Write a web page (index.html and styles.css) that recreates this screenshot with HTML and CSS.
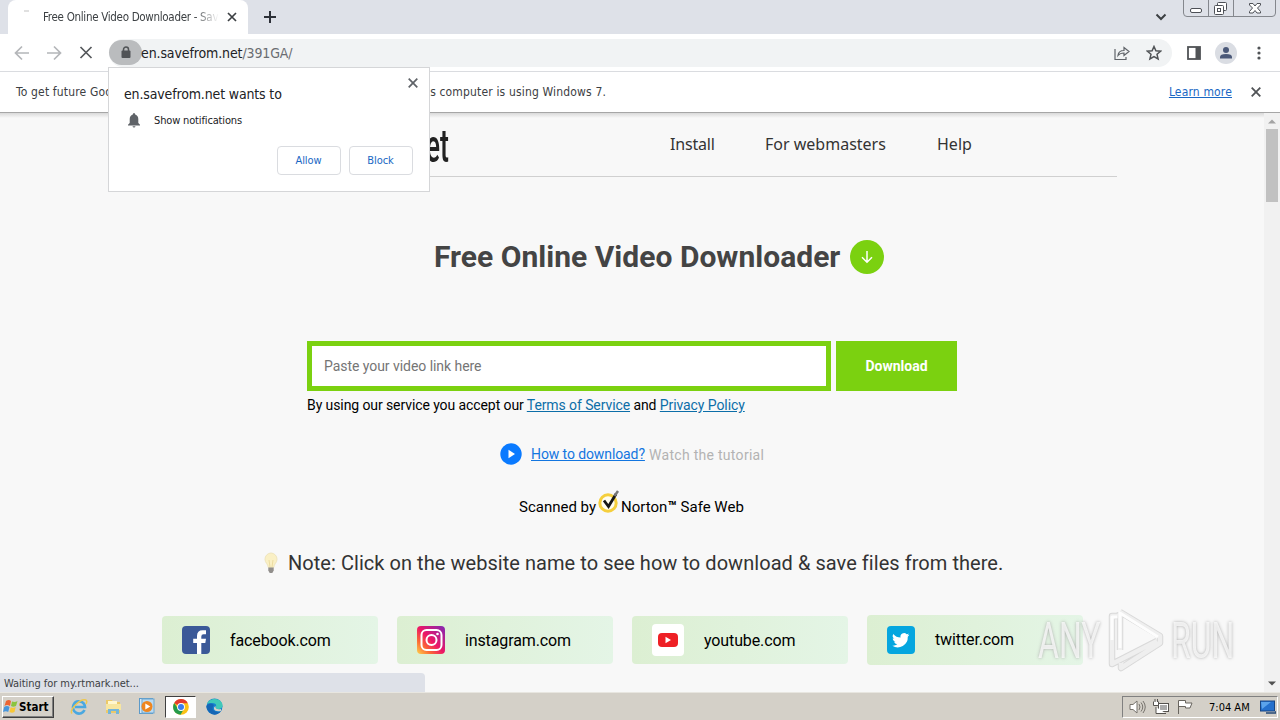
FILE: index.html
```html
<!DOCTYPE html>
<html lang="en">
<head>
  <meta charset="UTF-8">
  <meta name="viewport" content="width=device-width, initial-scale=1.0">
  <title>Free Online Video Downloader</title>
  <link rel="stylesheet" href="styles.css">
</head>
<body>

  <div class="tab-strip">
    <div class="tab">
      <span class="spinner"></span>
      <span class="tab-title">Free Online Video Downloader - Save</span>
      <svg class="tab-close" width="10" height="10" viewBox="0 0 10 10"><path d="M1 1l8 8M9 1L1 9" stroke="#3c4043" stroke-width="1.7"/></svg>
    </div>
    <svg class="new-tab" width="12" height="12" viewBox="0 0 12 12"><path d="M6 0v12M0 6h12" stroke="#2d3038" stroke-width="2"/></svg>
    <svg class="tab-search" width="12" height="8" viewBox="0 0 12 8"><path d="M1.500 1.500L6 6l4.500-4.500" fill="none" stroke="#3c4043" stroke-width="2"/></svg>
    <svg class="win-controls" width="94" height="18" viewBox="0 0 94 18">
      <path d="M.5 0v13q0 3.500 3.500 3.500h85q3.500 0 3.500-3.500V0M25.500 0v16M50.500 0v16" fill="none" stroke="#84878d"/>
      <g fill="#fff" stroke="#4d5056">
        <rect x="7.500" y="8.500" width="11" height="4" rx="1.500"/>
        <rect x="34.500" y="2.500" width="9" height="8" rx="1"/>
        <rect x="31.500" y="5.500" width="9" height="9" rx="1"/>
        <rect x="34.500" y="8.500" width="3" height="3"/>
        <path d="M66.500 3.500h3.500l2 2.500 2-2.500h3.500v1.500l-3 3 3 3.500v1.500H74l-2-2.500-2 2.500h-3.500v-1.500l3-3.500-3-3z"/>
      </g>
    </svg>
  </div>

  <div class="toolbar">
    <svg class="nav-icons" width="82" height="16" viewBox="0 0 82 16" fill="none" stroke-width="1.700">
      <path d="M15 8H2M8 1.500L1.500 8 8 14.500M33 8h13M40 1.500L46.500 8 40 14.500" stroke="#b4b6b9"/>
      <path d="M66.500 2l11 11M77.500 2l-11 11" stroke="#55585c"/>
    </svg>
    <div class="omnibox">
      <span class="lock">
        <svg width="10" height="13" viewBox="0 0 10 13"><path d="M2.500 5V3.500a2.500 2.500 0 015 0V5" fill="none" stroke="#505356" stroke-width="1.500"/><rect x=".5" y="4.500" width="9" height="7.500" rx="1" fill="#505356"/></svg>
      </span>
      <span class="url">en.savefrom.net<span class="url-path">/391GA/</span></span>
      <svg class="share" width="16" height="16" viewBox="0 0 16 16" fill="none" stroke="#5f6368" stroke-width="1.200"><path d="M1 4v10.500h11V12M4 10.500q.5-5 6-5V2.500l5 4-5 4V8Q6 8 4 10.500z"/></svg>
      <svg class="star" width="16" height="16" viewBox="0 0 16 16"><path d="M8 1.500l1.900 4.300 4.700.4-3.600 3.100 1.100 4.600L8 11.500l-4.100 2.400L5 9.300 1.400 6.200l4.700-.4z" fill="none" stroke="#505356" stroke-width="1.500"/></svg>
    </div>
    <svg class="side-panel" width="14" height="14" viewBox="0 0 14 14"><rect x="1" y="1" width="12" height="12" fill="#fff" stroke="#505356" stroke-width="1.800"/><path d="M8.500 1H13v12H8.500z" fill="#505356"/></svg>
    <span class="avatar">
      <svg width="14" height="14" viewBox="0 0 14 14" fill="#4a5878"><circle cx="7" cy="4" r="3"/><path d="M1 12.500V11q0-3 6-3t6 3v1.500z"/></svg>
    </span>
    <svg class="menu-dots" width="4" height="14" viewBox="0 0 4 14" fill="#505356"><circle cx="2" cy="2" r="1.600"/><circle cx="2" cy="7" r="1.600"/><circle cx="2" cy="12" r="1.600"/></svg>
  </div>

  <div class="infobar">
    <span class="info-text">To get future Google Chrome updates, you'll need Windows 10 or later. This computer is using Windows 7.</span>
    <a class="learn-more">Learn more</a>
    <svg width="10" height="10" viewBox="0 0 10 10"><path d="M.7.7l8.600 8.600M9.300.7L.7 9.300" stroke="#505356" stroke-width="1.800"/></svg>
  </div>

  <div class="view">
    <main class="page">
      <header class="site-header">
        <span class="logo">net</span>
        <nav class="site-nav">
          <a class="nav-install">Install</a>
          <a class="nav-webmasters">For webmasters</a>
          <a class="nav-help">Help</a>
        </nav>
      </header>

      <div class="headline">
        <h1>Free Online Video Downloader</h1>
        <svg width="34" height="34" viewBox="0 0 34 34"><circle cx="17" cy="17" r="17" fill="#7bd110"/><path d="M17 11v11M12 17.200l5 5 5-5" fill="none" stroke="#fff" stroke-width="1.500"/></svg>
      </div>

      <div class="search-box">
        <div class="search-form">
          <div class="search-input">Paste your video link here</div>
          <button class="search-btn">Download</button>
        </div>
        <p class="terms">By using our service you accept our <a>Terms of Service</a> and <a>Privacy Policy</a></p>
      </div>

      <div class="tutorial">
        <svg width="22" height="22" viewBox="0 0 22 22"><circle cx="11" cy="11" r="10.700" fill="#0a7aff"/><path d="M8.500 6.800v8.400l6.500-4.200z" fill="#fff"/></svg>
        <a>How to download?</a>
        <span>Watch the tutorial</span>
      </div>

      <div class="norton">
        <span class="scanned">Scanned by</span>
        <svg width="23" height="24" viewBox="0 0 23 24"><circle cx="11" cy="13" r="8.200" fill="#fffdf0" stroke="#f5cf3d" stroke-width="3"/><path d="M7 10.500l4.500 6L19 4" fill="none" stroke="#161616" stroke-width="2.800"/><path d="M17.500 6L21 1" stroke="#777" stroke-width="2.500"/></svg>
        <span class="safe-web">Norton<b>™</b> Safe Web</span>
      </div>

      <div class="note">
        <svg width="16" height="22" viewBox="0 0 16 22"><path d="M8 1a6.200 6.200 0 00-6 6.300c0 3.500 3 4.500 3.300 8.200h5.400C11 11.800 14 10.800 14 7.300A6.200 6.200 0 008 1z" fill="#faf0c5" stroke="#efe5bd"/><path d="M6 8l1 7M10 8l-1 7" stroke="#ecdca0"/><path d="M5.300 15.500h5.400v3L9.300 21H6.700l-1.400-2.500z" fill="#928f8c"/></svg>
        <span>Note: Click on the website name to see how to download &amp; save files from there.</span>
      </div>

      <div class="sites">
        <a class="site">
          <svg width="28" height="28" viewBox="0 0 28 28"><rect width="28" height="28" rx="4" fill="#3b5998"/><path d="M15 28V17h-3.800v-4.200H15V10q0-5.700 5.700-5.700H24v4h-2.500q-2.200 0-2.200 2.200v2.300H24l-.7 4.200h-4V28z" fill="#fff"/></svg>
          <span class="facebook">facebook.com</span>
        </a>
        <a class="site">
          <svg width="28" height="28" viewBox="0 0 28 28">
            <defs>
              <linearGradient id="insta" x1="0" y1="1" x2="1" y2="0"><stop offset="0" stop-color="#ffd34d"/><stop offset=".25" stop-color="#fb6b35"/><stop offset=".5" stop-color="#ed1766"/><stop offset="1" stop-color="#8029b5"/></linearGradient>
            </defs>
            <rect width="28" height="28" rx="4" fill="url(#insta)"/>
            <g fill="none" stroke="#fff" stroke-width="2"><rect x="4.500" y="4" width="20" height="20" rx="5"/><circle cx="14.500" cy="14" r="5"/></g>
            <circle cx="20.500" cy="8" r="1.300" fill="#fff"/>
          </svg>
          <span class="instagram">instagram.com</span>
        </a>
        <a class="site">
          <svg width="32" height="32" viewBox="0 0 32 32"><rect width="32" height="32" rx="4" fill="#fff"/><rect x="6" y="9" width="20" height="14" rx="4" fill="#ee2025"/><path d="M13.500 12.800v6.400L19 16z" fill="#fff"/></svg>
          <span class="youtube">youtube.com</span>
        </a>
        <a class="site site-tall">
          <svg width="28" height="28" viewBox="0 0 28 28"><rect width="28" height="28" rx="4" fill="#05a6df"/><g transform="translate(5.300 5.300) scale(.72)"><path d="M23.600 4.900a10 10 0 01-2.800.8 5 5 0 002.200-2.700 10 10 0 01-3.100 1.200A4.900 4.900 0 0011.500 8.700 14 14 0 011.400 3.600a4.900 4.900 0 001.500 6.600 5 5 0 01-2.200-.6 4.900 4.900 0 003.900 4.900 5 5 0 01-2.200.1 4.900 4.900 0 004.600 3.400A10 10 0 010 20 14 14 0 0021.500 7.500a10 10 0 002.100-2.600z" fill="#fff"/></g></svg>
          <span class="twitter">twitter.com</span>
        </a>
      </div>
    </main>

    <div class="scrollbar">
      <svg width="8" height="5" viewBox="0 0 8 5"><path d="M0 4.500L4 .5l4 4z" fill="#a3a3a3"/></svg>
      <div class="thumb"></div>
      <svg class="scroll-down" width="8" height="5" viewBox="0 0 8 5"><path d="M0 .5l4 4 4-4z" fill="#505050"/></svg>
    </div>

    <div class="status">Waiting for my.rtmark.net...</div>

    <div class="watermark">
      <span class="any">ANY</span>
      <svg width="60" height="66" viewBox="0 0 60 66" fill="none" stroke-linejoin="round">
        <path d="M14 8h-8v48L51 33M14 4l40 24v7L15 60v-5M14 4v38" stroke="#cfcfcf" stroke-width="6.500"/>
        <path d="M14 8h-8v48L51 33M14 4l40 24v7L15 60v-5M14 4v38" stroke="#ececec" stroke-width="4.500"/>
        <path d="M14 40V5l38 24M6 32V9h5" stroke="#fff" stroke-width="3"/>
      </svg>
      <span>RUN</span>
    </div>
  </div>

  <div class="taskbar">
    <button class="start">
      <svg width="15" height="15" viewBox="0 0 15 15"><path d="M3 2q3-2 5 0L7 7Q4 5 1.500 7z" fill="#ec6534"/><path d="M9 2.500q3 1 5.500-.5L13 7q-3 1.500-5 0z" fill="#8bc43e"/><path d="M1.200 8Q4 6 6.500 8l-1.300 5Q3 11.300 0 13z" fill="#4796dd"/><path d="M7.700 8.200q3 1.300 5-.2L11.500 13q-2.500 1.600-5 0z" fill="#f8c737"/></svg>
      Start
    </button>
    <div class="pinned">
      <svg width="18" height="18" viewBox="0 0 18 18" fill="none"><path d="M14.500 12A6 6 0 113.500 7 6 6 0 0115 9H5" stroke="#4aa8e0" stroke-width="2.700"/><path d="M2 15.500C-1 12 10 0 16 2q1.500 1 0 4" stroke="#edc74e" stroke-width="1.500"/></svg>
      <svg width="17" height="17" viewBox="0 0 17 17"><path d="M1 2h6l1 2h7v11H1z" fill="#ebc969"/><path d="M3 3h9v4H3z" fill="#fff7cf"/><path d="M1 6h15v6H1z" fill="#f7e6a0"/><path d="M3 16v-5h11v5h-3v-3H6v3z" fill="#75b6d9"/></svg>
      <svg width="16" height="17" viewBox="0 0 16 17"><rect x=".5" y=".5" width="13" height="15" fill="#d4e9f9" stroke="#5c9ac9"/><rect x="3" y="1" width="12" height="14" fill="#b9daf2" stroke="#6da5ce"/><circle cx="8" cy="8.500" r="5.500" fill="#ee8620"/><path d="M6.300 5.500v6l5-3z" fill="#fff"/></svg>
      <span class="active-app">
        <svg width="16" height="16" viewBox="0 0 16 16"><circle cx="8" cy="8" r="7.800" fill="#fbc116"/><path d="M8 8L1.200 4A7.800 7.800 0 0114.800 4.200H8z" fill="#e33b2e"/><path d="M1.200 4A7.800 7.800 0 007.500 15.800L11 9.700 5 9.700z" fill="#249a4b"/><circle cx="8" cy="8" r="3.900" fill="#fff"/><circle cx="8" cy="8" r="3" fill="#3b7ded"/></svg>
      </span>
      <svg width="17" height="17" viewBox="0 0 17 17"><circle cx="8.500" cy="8.500" r="8" fill="#1681cf"/><path d="M1 6C3 0 13-1 16 5q2 5-3 6-4 0-3-2 1-4-4-4-4 0-5 1z" fill="#3fc8b9"/><path d="M1 7q4-3 7 0-4 5 3 7 2 .3 4-1Q9 20 3 14-1 10 1 7z" fill="#1565b5"/><path d="M9.500 8q-.5 4 5.500 3v2q-6 1-7-2-.5-2 1.500-3z" fill="#d4d0c8"/></svg>
    </div>
    <div class="tray">
      <svg class="speaker" width="17" height="16" viewBox="0 0 17 16" fill="none" stroke="#77736d"><path d="M1 5.500h3L8 2v12l-4-3.500H1z" fill="#fff"/><path d="M10 5q2 3 0 6M12 3.500q3.500 4.500 0 9M14 2q4.500 6 0 12"/></svg>
      <svg class="network" width="16" height="16" viewBox="0 0 16 16" fill="#fff" stroke="#55524e"><rect x="5.500" y="4.500" width="10" height="8"/><path d="M7 6h7v5H7z" fill="#aaa" stroke="none"/><path d="M3 8v6.500h10M.5 2.500v4h5v-4M2 0v3M4.500 0v3"/></svg>
      <svg class="flag" width="16" height="16" viewBox="0 0 16 16"><path d="M1.500 15V1.500h7V4H15l-2 5H8.500V7.500h-7" fill="#fff" stroke="#69655f"/></svg>
      <span class="clock">7:04 AM</span>
      <svg class="show-desktop" width="16" height="14" viewBox="0 0 16 14"><rect x=".5" y="1" width="14" height="10" fill="#2470cd" stroke="#174583"/><path d="M1 2h10L2 9z" fill="#5ba3eb"/><path d="M6 13h10v-2" stroke="#234774" fill="none" stroke-width="1.500"/></svg>
    </div>
  </div>

  <!-- permission bubble over the toolbar, infobar and page -->
  <div class="permission">
    <svg class="permission-close" width="10" height="10" viewBox="0 0 10 10"><path d="M.7.7l8.600 8.600M9.300.7L.7 9.300" stroke="#5f6368" stroke-width="1.700"/></svg>
    <div class="permission-title">en.savefrom.net wants to</div>
    <div class="permission-row">
      <svg width="12" height="15" viewBox="0 0 12 15" fill="#5f6368"><path d="M6 0q1.200 0 1.200 1.500Q10.300 2.500 10.300 6v4l1.700 1.700v.8H0v-.8L1.700 10V6q0-3.500 3.100-4.500Q4.800 0 6 0zM4.500 13.200h3Q7.300 14.600 6 14.600t-1.500-1.400z"/></svg>
      <span>Show notifications</span>
    </div>
    <div class="permission-actions">
      <button>Allow</button>
      <button>Block</button>
    </div>
  </div>

</body>
</html>
```
FILE: styles.css
```css
* {
  box-sizing: border-box;
}

body {
  font-family: "DejaVu Sans Condensed", "DejaVu Sans", sans-serif;
  font-stretch: condensed;
  margin: 0;
  width: 1280px;
  height: 720px;
  overflow: hidden;
  display: flex;
  flex-direction: column;
  background-color: #f8f8f8;
  white-space: nowrap;
}

svg {
  display: block;
  flex: none;
}

button {
  font-family: inherit;
  padding: 0;
}

/* browser chrome */
.tab-strip {
  height: 34px;
  flex: none;
  display: flex;
  background-color: #dee1e8;
}

.tab {
  width: 240px;
  margin-left: 8px;
  padding: 0 11px 0 16px;
  display: flex;
  align-items: center;
  background-color: #fff;
  border-radius: 8px 8px 0 0;
}

.spinner {
  width: 5px;
  height: 2px;
  margin: 0 14px 12px 0;
  background-color: #e0e0e0;
}

.tab-title {
  width: 177px;
  overflow: hidden;
  font-size: 11.5px;
  letter-spacing: -0.3px;
  color: #3c4043;
  -webkit-mask-image: linear-gradient(to right, #000 150px, transparent 176px);
}

.tab-close {
  margin-left: 7px;
}

.new-tab {
  margin: 11px 0 0 16px;
}

.tab-search {
  margin: 13px 16px 0 auto;
}

.win-controls {
  margin-right: 3px;
}

.toolbar {
  height: 38px;
  flex: none;
  display: flex;
  align-items: center;
  background-color: #fff;
  border-bottom: 1px solid #dadce0;
}

.nav-icons {
  margin-left: 14px;
}

.omnibox {
  width: 1063px;
  height: 28px;
  margin-left: 13px;
  border-radius: 14px;
  background-color: #f1f3f4;
  display: flex;
  align-items: center;
}

.lock {
  width: 33px;
  height: 25px;
  border-radius: 13px;
  background-color: #babcbe;
  display: flex;
  align-items: center;
  justify-content: center;
}

.url {
  font-size: 14px;
  letter-spacing: -0.12px;
  margin-left: -1px;
  color: #202124;
}

.url-path {
  color: #6a6d71;
}

.share {
  margin-left: auto;
}

.star {
  margin: 0 10px 0 16px;
}

.side-panel {
  margin-left: 15px;
}

.avatar {
  width: 22px;
  height: 22px;
  margin-left: 14px;
  border-radius: 50%;
  background-color: #dadde3;
  display: flex;
  align-items: center;
  justify-content: center;
}

.menu-dots {
  margin-left: 20px;
}

.infobar {
  height: 41px;
  flex: none;
  display: flex;
  align-items: center;
  padding: 0 19px 1px 16px;
  background-color: #fff;
  border-bottom: 1px solid #a6a6a6;
  font-size: 12px;
  letter-spacing: 0.16px;
  color: #3c4043;
}

.learn-more {
  margin-left: auto;
  margin-right: 19px;
  color: #1a67c4;
  text-decoration: underline;
}

/* page */
.view {
  height: 579px;
  flex: none;
  position: relative;
  display: flex;
}

.page {
  width: 1264px;
  height: 579px;
  overflow: hidden;
  background: linear-gradient(#d9d9d9, #f8f8f8 5px);
  font-family: Roboto, sans-serif;
  font-stretch: normal;
  color: #000;
}

.site-header {
  width: 970px;
  height: 64px;
  margin: 0 auto;
  border-bottom: 1px solid #d0d0d0;
  display: flex;
}

.logo {
  width: 302px;
  text-align: right;
  font-size: 46px;
  font-weight: 500;
  line-height: 66px;
  color: #222;
  transform: scaleX(0.58);
  transform-origin: right;
}

.site-nav {
  display: flex;
  margin-left: 221px;
  font-family: "Noto Sans", sans-serif;
  font-size: 16px;
  line-height: 62px;
  color: #333;
}

.nav-install {
  width: 95px;
  letter-spacing: -0.2px;
}

.nav-webmasters {
  width: 172px;
}

.headline {
  display: flex;
  align-items: center;
  height: 40px;
  margin: 60px 0 0 434px;
}

.headline h1 {
  width: 416px;
  margin: 0;
  padding-bottom: 1px;
  font-size: 30px;
  font-weight: 700;
  letter-spacing: 0.02px;
  color: #444;
}

.search-box {
  width: 650px;
  margin: 64px 0 0 307px;
}

.search-form {
  display: flex;
  gap: 5px;
}

.search-input {
  width: 524px;
  height: 50px;
  padding-left: 12px;
  border: 5px solid #7bd110;
  background-color: #fff;
  font-size: 14px;
  line-height: 40px;
  letter-spacing: -0.05px;
  color: #757575;
}

.search-btn {
  width: 121px;
  height: 50px;
  border: none;
  background-color: #7bd110;
  color: #fff;
  font-family: Roboto, sans-serif;
  font-size: 14px;
  font-weight: 700;
}

.terms {
  margin: 5px 0 0;
  font-size: 14px;
  line-height: 18px;
  letter-spacing: -0.09px;
}

.terms a {
  color: #0c6ea8;
  text-decoration: underline;
}

.tutorial {
  display: flex;
  align-items: center;
  height: 24px;
  margin: 28px 0 0 500px;
  font-size: 14px;
}

.tutorial a {
  width: 114px;
  margin: 0 4px 0 9px;
  letter-spacing: -0.1px;
  color: #1376e0;
  text-decoration: underline;
}

.tutorial span {
  padding-top: 2px;
  letter-spacing: 0.29px;
  color: #b3b3b3;
}

.norton {
  display: flex;
  align-items: center;
  height: 26px;
  margin: 23px 0 0 519px;
  font-size: 15px;
}

.norton svg {
  margin: 0 1px 0 1px;
}

.scanned,
.safe-web {
  padding-top: 10px;
}

.note {
  display: flex;
  align-items: center;
  height: 30px;
  margin: 33px 0 0 263px;
  gap: 9px;
  font-size: 20px;
  letter-spacing: 0.05px;
  color: #333;
}

.sites {
  display: flex;
  gap: 19px;
  margin: 38px 0 0 162px;
}

.site {
  width: 216px;
  height: 48px;
  padding-left: 20px;
  border-radius: 4px;
  background: linear-gradient(to right, #dcefd2, #e4f5e6);
  display: flex;
  align-items: center;
  gap: 20px;
  font-size: 16px;
  letter-spacing: -0.12px;
}

.site-tall {
  height: 50px;
  margin-top: -1px;
  padding-bottom: 1px;
}

.scrollbar {
  width: 16px;
  background-color: #f1f1f1;
  display: flex;
  flex-direction: column;
  align-items: center;
  padding: 6px 0;
}

.thumb {
  width: 12px;
  height: 73px;
  margin-top: 5px;
  background-color: #c1c1c1;
}

.scroll-down {
  margin-top: auto;
}

.status {
  position: absolute;
  left: 0;
  bottom: 0;
  width: 425px;
  height: 19px;
  padding-left: 4px;
  border-radius: 0 4px 0 0;
  background-color: #dee1e8;
  font-size: 11px;
  line-height: 21px;
  letter-spacing: -0.05px;
  color: #3c4043;
}

.watermark {
  position: absolute;
  left: 1038px;
  top: 495px;
  display: flex;
  align-items: center;
  gap: 5px;
  font-family: Roboto, sans-serif;
  font-stretch: normal;
  font-size: 50px;
  line-height: 66px;
  color: rgba(255, 255, 255, 0.75);
  text-shadow: 0 0 4px #aaa;
}

.watermark span {
  width: 62px;
  transform: scaleX(0.64);
  transform-origin: left;
}

.watermark svg {
  opacity: 0.75;
  margin-left: 1px;
}

/* taskbar */
.taskbar {
  height: 28px;
  flex: none;
  display: flex;
  align-items: center;
  background-color: #d4d0c8;
  border-top: 1px solid #e8e6e0;
}

.start {
  width: 52px;
  height: 22px;
  margin-left: 2px;
  display: flex;
  align-items: center;
  gap: 1px;
  background-color: #d4d0c8;
  border: 1px solid;
  border-color: #fff #404040 #404040 #fff;
  box-shadow: inset -1px -1px #808080;
  font-size: 11.5px;
  font-weight: 700;
}

.pinned {
  display: flex;
  align-items: center;
  margin-left: 16px;
}

.pinned svg + svg {
  margin-left: 17px;
}

.active-app {
  width: 31px;
  height: 22px;
  margin: 0 10px;
  display: flex;
  align-items: center;
  justify-content: center;
  background-color: #fff;
  border: 1px solid;
  border-color: #404040 #fff #fff #404040;
}

.tray {
  width: 156px;
  height: 22px;
  margin: 0 2px 0 auto;
  padding-left: 6px;
  display: flex;
  align-items: center;
  border: 1px solid;
  border-color: #808080 #fff #fff #808080;
  font-size: 11px;
}

.network {
  margin-left: 7px;
}

.flag {
  margin-left: 8px;
}

.clock {
  width: 51px;
  margin-left: 16px;
  padding-top: 1px;
}

/* permission bubble */
.permission {
  position: absolute;
  left: 108px;
  top: 67px;
  width: 322px;
  height: 125px;
  padding: 17px 16px 16px 15px;
  background-color: #fff;
  border: 1px solid #d5d6d8;
  color: #202124;
}

.permission-close {
  position: absolute;
  right: 11px;
  top: 10px;
}

.permission-title {
  font-size: 14px;
  line-height: 18px;
  letter-spacing: -0.15px;
}

.permission-row {
  display: flex;
  align-items: center;
  gap: 14px;
  margin: 9px 0 0 4px;
  height: 16px;
  font-size: 11px;
  letter-spacing: -0.15px;
}

.permission-actions {
  display: flex;
  justify-content: flex-end;
  gap: 8px;
  margin-top: 18px;
}

.permission-actions button {
  width: 64px;
  height: 29px;
  padding-right: 1px;
  border: 1px solid #dadce0;
  border-radius: 4px;
  background-color: #fff;
  color: #1a67c4;
  font-size: 11px;
  letter-spacing: -0.1px;
}
```
